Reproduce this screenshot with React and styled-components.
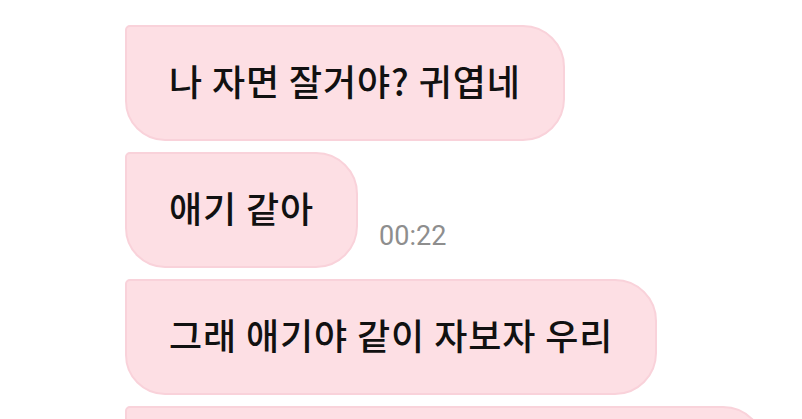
import React from "react";
import styled, {createGlobalStyle} from "styled-components";

const Global = createGlobalStyle`
  html, body {
    margin: 0;
    padding: 0;
    background: #ffffff;
    overflow: hidden;
  }
`

const Page = styled.div`
  width: 802px;
  height: 419px;
  overflow: hidden;
  box-sizing: border-box;
  padding: 25px 0 0 125px;
  display: flex;
  flex-direction: column;
  gap: 11px;
  font-family: "Noto Sans CJK KR", "Noto Sans", sans-serif;
`

const Row = styled.div`
  display: flex;
  align-items: flex-end;
  gap: 21px;
`

const Bubble = styled.div`
  box-sizing: border-box;
  height: 116px;
  min-width: ${p => p.$minWidth || 0}px;
  padding: 0 42px 6px;
  display: flex;
  align-items: center;
  background: #fddfe4;
  border: 2px solid #f9d2da;
  border-radius: 5px 42px 42px 40px;
  color: #111111;
  font-size: 36px;
  font-weight: 500;
  letter-spacing: 0.9px;
  white-space: nowrap;
`

const Time = styled.span`
  font-family: Roboto, "Liberation Sans", sans-serif;
  font-size: 27px;
  color: #8e8e8e;
  margin-bottom: 16px;
`

function App() {
	return (
		<>
			<Global/>
			<Page>
				<Row><Bubble>나 자면 잘거야? 귀엽네</Bubble></Row>
				<Row>
					<Bubble>애기 같아</Bubble>
					<Time>00:22</Time>
				</Row>
				<Row><Bubble>그래 애기야 같이 자보자 우리</Bubble></Row>
				<Row><Bubble $minWidth={640}>&nbsp;</Bubble></Row>
			</Page>
		</>
	)
}

export default App
